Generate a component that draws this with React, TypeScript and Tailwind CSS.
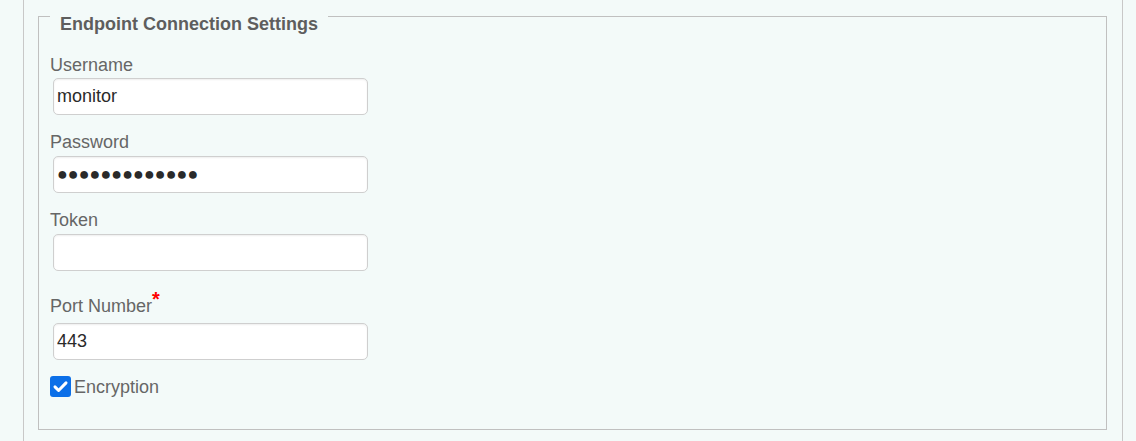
import React from "react";

const font = { fontFamily: '"Liberation Sans", Arial, sans-serif' };

function Field({
  label,
  value,
  required = false,
  labelClass = "mt-[17px]",
  inputGap = "mt-[3px]",
}: {
  label: string;
  value: string;
  required?: boolean;
  labelClass?: string;
  inputGap?: string;
}) {
  return (
    <div className="flex flex-col">
      <label className={`${labelClass} h-[21px] text-[18px] leading-[21px] text-[#666]`}>
        {label}
        {required && (
          <span className="relative -top-[6px] text-[20px] font-bold leading-none text-[#ff0000]">*</span>
        )}
      </label>
      <input
        type="text"
        readOnly
        value={value}
        className={`${inputGap} ml-[3px] h-[37px] w-[315px] rounded-[5px] border border-[#cfcfcf] bg-white px-[3px] text-[18px] text-[#2a2a2a] shadow-[inset_0_1px_2px_rgba(0,0,0,0.07)] outline-none`}
        style={font}
      />
    </div>
  );
}

export default function App() {
  return (
    <div className="min-h-[441px] w-full bg-[#f3faf9]" style={font}>
      <div className="ml-[23px] min-h-[441px] w-[1100px] border-x border-[#c8c8c8] px-[14px] pt-4">
        <div className="w-[1069px] border border-[#c0c0c0] pb-[31px] pl-[11px]">
          <div className="-mt-[3px] w-fit bg-[#f3faf9] px-[10px] text-[18px] font-bold leading-[21px] text-[#5e5e5e]">
            Endpoint Connection Settings
          </div>
          <Field label="Username" value="monitor" labelClass="mt-[20px]" inputGap="mt-[2px]" />
          <Field label="Password" value={"\u25CF".repeat(13)} />
          <Field label="Token" value="" />
          <Field label="Port Number" value="443" required labelClass="mt-[24px]" inputGap="mt-[7px]" />
          <label className="mt-[16px] flex items-start gap-[3px]">
            <span className="flex h-[21px] w-[21px] items-center justify-center rounded-[3px] bg-[#0b6fe8]">
              <svg width="17" height="17" viewBox="0 0 16 16" fill="none">
                <path d="M2.8 8.4l3.4 3.4L13.2 4.6" stroke="white" strokeWidth="2.8" strokeLinecap="round" strokeLinejoin="round" />
              </svg>
            </span>
            <span className="mt-px text-[18px] leading-[21px] text-[#666]">Encryption</span>
          </label>
        </div>
      </div>
    </div>
  );
}
